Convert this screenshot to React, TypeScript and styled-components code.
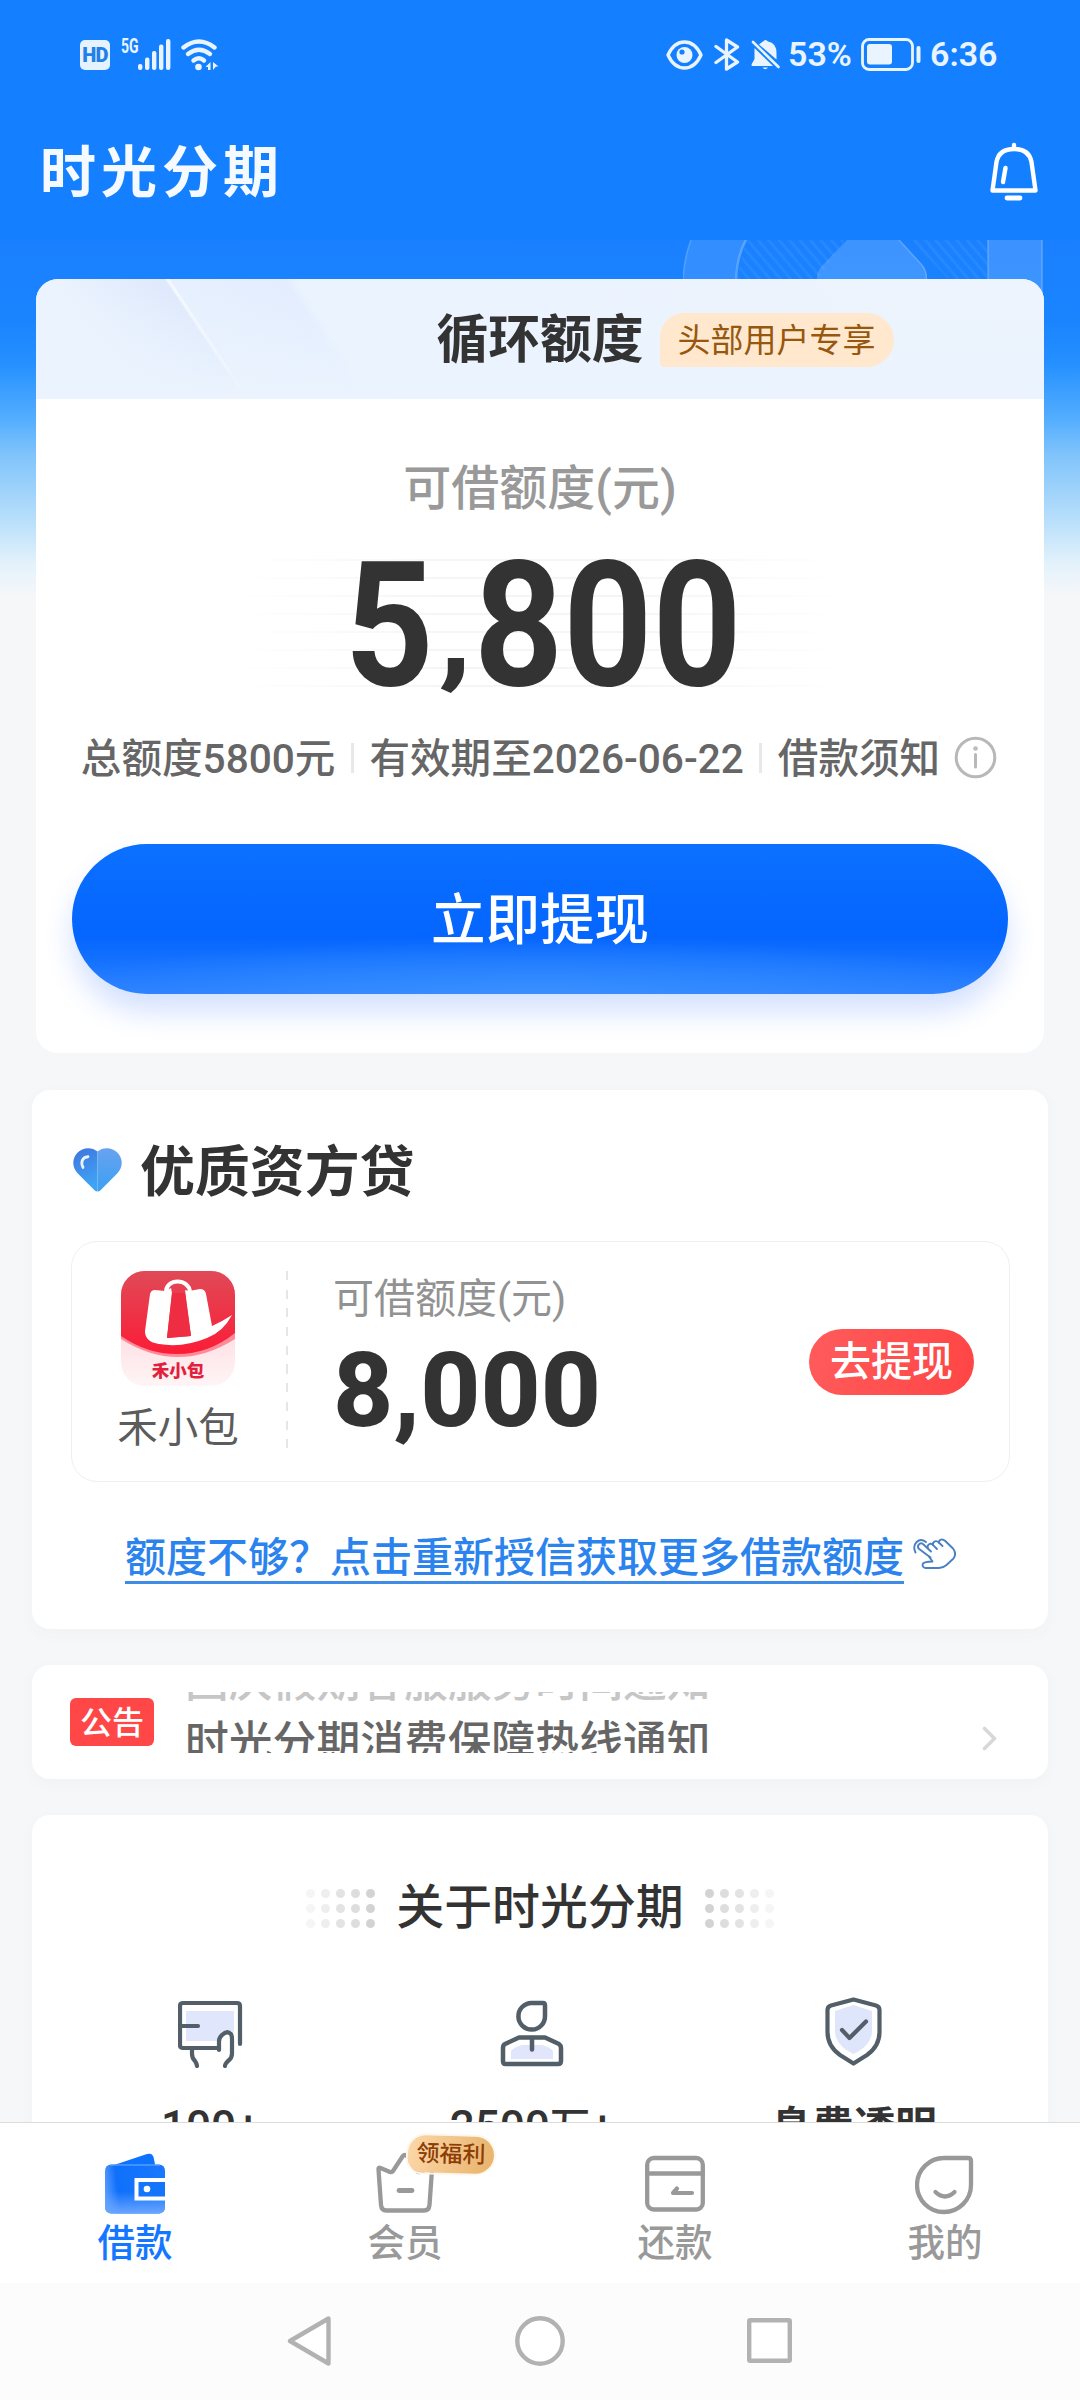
import React from "react";
import styled, { createGlobalStyle, css } from "styled-components";

const CJK = `"Noto Sans CJK SC", sans-serif`;
const MIXED = `Roboto, "Noto Sans CJK SC", sans-serif`;

const GlobalStyle = createGlobalStyle`
  * { box-sizing: border-box; }
  body { margin: 0; background: #f6f7f9; }
  svg { display: block; flex: none; }
`;

const Screen = styled.div`
  position: relative;
  width: 1080px;
  height: 2400px;
  overflow: hidden;
  display: flex;
  flex-direction: column;
  font-family: ${MIXED};
  background: linear-gradient(
    #1480ff 0,
    #1480ff 239px,
    #1a80ff 241px,
    #1a84ff 320px,
    #2490ff 363px,
    #55aeff 420px,
    #80c4fb 455px,
    #b8dffb 520px,
    #e4f2fb 565px,
    #f6f7f9 597px
  );
`;

const StatusBar = styled.header`
  flex: none;
  height: 108px;
  padding: 0 78px 0 80px;
  display: flex;
  justify-content: space-between;
  color: #e9f4ff;
`;

const StatusGroup = styled.div`
  display: flex;
  align-items: center;
  height: 109px;
`;

const HdBadge = styled.span`
  width: 30px;
  height: 30px;
  margin-right: 11px;
  border-radius: 5px;
  background: #e4f3ff;
  color: #2380e8;
  font: 900 20px/31px Roboto, sans-serif;
  text-align: center;
  letter-spacing: -0.8px;
`;

const NetworkType = styled.span`
  align-self: flex-start;
  margin-top: 36px;
  width: 17px;
  font: 700 20px/20px Roboto, sans-serif;
  transform: scaleX(0.7);
  transform-origin: left;
`;

const StatusText = styled.span<{ $width: number }>`
  width: ${(p) => p.$width}px;
  font: 600 34px/43px Roboto, sans-serif;
  white-space: nowrap;
`;

const TitleBar = styled.div`
  flex: none;
  height: 132px;
  padding: 0 42px 0 40px;
  display: flex;
  align-items: flex-start;
  justify-content: space-between;
`;

const Brand = styled.h1`
  margin: 20px 0 0;
  font: 700 56px/80px ${CJK};
  letter-spacing: 5px;
  color: #f4faff;
`;

const BellButton = styled.button`
  margin: 34px 0 0;
  padding: 0;
  border: 0;
  background: none;
`;

const Decor = styled.svg`
  position: absolute;
  left: 683px;
  top: 240px;
`;

const Content = styled.main`
  position: relative;
  flex: 1;
  min-height: 0;
  overflow: hidden;
  padding: 39px 32px 0;
`;

const CreditCard = styled.section`
  height: 774px;
  margin: 0 4px;
  border-radius: 22px;
  background: #fff;
  overflow: hidden;
`;

const CreditHead = styled.div`
  height: 120px;
  display: grid;
  grid-template-columns: 1fr auto 1fr;
  align-items: center;
  background:
    linear-gradient(rgba(235, 243, 254, 0) 10%, #ebf3fe 100%),
    linear-gradient(56.3deg, transparent 0 174px, rgba(255, 255, 255, 0.6) 175px 177px, transparent 178px),
    linear-gradient(56.3deg, #ebf3fe 80px, #dfe9fc 172px, #e7f0fe 177px, #e3edfe 272px, #ebf3fe 282px, #edf4fe);
`;

const CreditTitle = styled.h2`
  grid-column: 2;
  margin: 3px 0 0;
  font: 700 51.8px/70px ${MIXED};
  color: #333;
`;

const UserTag = styled.span`
  justify-self: start;
  margin: 2px 0 0 16px;
  height: 54px;
  padding: 0 18px;
  border-radius: 24px 27px 27px 4px;
  background: #ffe8cd;
  color: #96570f;
  font: 400 33px/55px ${MIXED};
`;

const CreditBody = styled.div`
  display: flex;
  flex-direction: column;
  align-items: center;
  padding: 60px 36px 0;
`;

const AmountLabel = styled.div<{ $size: number }>`
  font: 500 ${(p) => p.$size}px/60px ${MIXED};
  color: #999;
`;

const BigAmount = styled.div`
  width: 600px;
  height: 140px;
  margin-top: 36px;
  display: flex;
  justify-content: center;
  background:
    linear-gradient(90deg, #fff, rgba(255, 255, 255, 0) 35%, rgba(255, 255, 255, 0) 65%, #fff),
    repeating-linear-gradient(#fff 0 4px, #f5f5f9 4px 6px, #fff 6px 18px);
`;

const BigDigits = styled.span`
  font: 700 174px/141px Roboto, sans-serif;
  color: #333;
  white-space: nowrap;
  transform: translateX(3px) scaleX(0.893);
`;

const Comma = styled.span`
  display: inline-block;
  width: 45px;
  font-size: 118px;
  line-height: 1;
  text-align: center;
  vertical-align: 13px;
  transform: translateX(1px) scaleX(1.3);
`;

const InfoRow = styled.div`
  height: 50px;
  margin-top: 39px;
  display: flex;
  align-items: center;
  font: 500 40.6px/50px ${MIXED};
  color: #666;
  white-space: nowrap;
`;

const Divider = styled.i`
  width: 3px;
  height: 30px;
  margin: -2px 15.5px 0;
  background: #e8e8e8;
`;

const PrimaryButton = styled.button`
  width: 936px;
  height: 150px;
  margin-top: 60px;
  padding: 0;
  border: 0;
  border-radius: 75px;
  color: #fff;
  font: 500 54.5px/152px ${MIXED};
  background:
    radial-gradient(ellipse 520px 55px at 50% 100%, rgba(58, 146, 255, 0.85), rgba(58, 146, 255, 0)),
    linear-gradient(#0c70ff 0, #0668ff 45%, #0566ff 62%, #1b76ff 84%, #2c80ff 100%);
  box-shadow: 0 18px 28px rgba(40, 106, 255, 0.2);
`;

const Panel = styled.section<{ $h: number; $gap?: number }>`
  height: ${(p) => p.$h}px;
  margin-top: ${(p) => p.$gap ?? 36}px;
  border-radius: 18px;
  background: #fff;
  box-shadow: 0 4px 16px rgba(60, 80, 100, 0.03);
`;

const PartnerPanel = styled(Panel)`
  padding: 47px 38px 0 39px;
`;

const PanelTitle = styled.h2`
  margin: 0;
  height: 70px;
  display: flex;
  align-items: center;
  gap: 18px;
  padding-left: 2px;
  font: 700 54.9px/72px ${MIXED};
  color: #333;
`;

const Offer = styled.div`
  height: 241px;
  margin-top: 34px;
  padding-right: 35px;
  display: flex;
  align-items: center;
  border: 1.5px solid #f0f0f0;
  border-radius: 26px;
`;

const Merchant = styled.div`
  width: 216px;
  height: 182px;
  padding-right: 4px;
  display: flex;
  flex-direction: column;
  align-items: center;
  background: repeating-linear-gradient(#e6e6e6 0 9px, transparent 9px 18.7px) right / 2px 100% no-repeat;
`;

const MerchantLogo = styled.div`
  position: relative;
  width: 114px;
  height: 115px;
  border-radius: 24px;
  overflow: hidden;
`;

const LogoCaption = styled.span`
  position: absolute;
  left: 0;
  right: 0;
  bottom: 6px;
  text-align: center;
  font: 900 17.5px/20px ${CJK};
  color: #e21f3c;
`;

const MerchantName = styled.div`
  margin-top: 17px;
  font: 400 40.5px/50px ${MIXED};
  color: #5c5c5c;
`;

const OfferInfo = styled.div`
  flex: 1;
  height: 182px;
  padding-left: 45px;
`;

const OfferLabel = styled.div`
  margin-top: -2px;
  font: 400 41px/60px ${MIXED};
  color: #929292;
`;

const OfferAmount = styled.div`
  margin-top: 5px;
  font: 800 104.5px/114px Roboto, sans-serif;
  color: #333;
`;

const OfferButton = styled.button`
  width: 165px;
  height: 66px;
  padding: 0;
  border: 0;
  border-radius: 33px;
  background: linear-gradient(100deg, #ff5b5b, #ff4545);
  color: #fff;
  font: 500 41px/67px ${MIXED};
`;

const MoreLink = styled.a`
  display: flex;
  align-items: center;
  justify-content: center;
  gap: 9px;
  margin: 47px 0 0 0;
  color: #2b83ee;
`;

const MoreText = styled.span`
  height: 55px;
  border-bottom: 3px solid #3f8ce8;
  font: 500 41px/58px ${MIXED};
  white-space: nowrap;
`;

const NoticePanel = styled(Panel)`
  display: flex;
  align-items: flex-start;
  padding: 27px 51px 0 38px;
`;

const NoticeTag = styled.span`
  width: 84px;
  height: 48px;
  margin: 6px 31px 0 0;
  border-radius: 6px;
  background: #ff4747;
  color: #fff;
  font: 500 32px/51px ${MIXED};
  text-align: center;
`;

const Ticker = styled.div`
  flex: 1;
  height: 61px;
  overflow: hidden;
`;

const TickerLine = styled.div<{ $leaving?: boolean }>`
  height: 61px;
  font: 500 43.8px/61px ${MIXED};
  color: #666;
  ${(p) =>
    p.$leaving &&
    css`
      margin-top: -40px;
      color: #c6c6c6;
    `}
`;

const ChevronBox = styled.div`
  margin-top: 34px;
`;

const AboutPanel = styled(Panel)`
  padding-top: 61px;
`;

const AboutTitle = styled.h2`
  margin: 0;
  height: 64px;
  display: flex;
  align-items: center;
  justify-content: center;
  gap: 21px;
  font: 500 47.9px/65px ${MIXED};
  color: #333;
`;

const DotGrid = styled.span`
  display: grid;
  grid-template-columns: repeat(5, 9px);
  gap: 6px;
`;

const Dot = styled.i<{ $alpha: number }>`
  width: 9px;
  height: 9px;
  border-radius: 50%;
  background: rgba(200, 200, 200, ${(p) => p.$alpha});
`;

const Features = styled.div`
  margin: 56px 0 0 18px;
  display: grid;
  grid-template-columns: repeat(3, 321.5px);
`;

const Feature = styled.div`
  display: flex;
  flex-direction: column;
  align-items: center;
`;

const FeatureLabel = styled.div<{ $bold?: boolean }>`
  margin-top: 30px;
  color: #333;
  font: ${(p) => (p.$bold ? "700 41.5px" : "500 40.5px")} / 60px ${MIXED};
`;

const Numeral = styled.span`
  font-size: 44px;
  line-height: 1;
`;

const TabBar = styled.nav`
  flex: none;
  height: 161px;
  display: grid;
  grid-template-columns: repeat(4, 1fr);
  border-top: 1.5px solid #dcdcdc;
  background: #fff;
`;

const Tab = styled.div<{ $active?: boolean }>`
  position: relative;
  display: flex;
  flex-direction: column;
  align-items: center;
  padding-top: 28px;
  color: ${(p) => (p.$active ? "#1377ff" : "#999")};
  font: 500 37.5px/50px ${MIXED};
`;

const TabLabel = styled.span`
  margin-top: 3px;
`;

const TabBadge = styled.span`
  position: absolute;
  left: 138px;
  top: 13px;
  width: 86px;
  height: 37px;
  border-radius: 18px 19px 19px 14px;
  background: linear-gradient(100deg, #fcd7a9, #e8b36b);
  box-shadow: 0 0 0 2px #fff7ee;
  color: #8d3e07;
  font: 500 23px/38px ${MIXED};
  text-align: center;
  transform: rotate(1.5deg);
`;

const SystemNav = styled.footer`
  flex: none;
  height: 117px;
  padding: 0 1px 2px 0;
  display: flex;
  align-items: center;
  justify-content: center;
  gap: 182px;
  background: #fcfcfc;
`;

const SignalIcon = () => (
  <svg width="33" height="31" viewBox="0 0 33 31" fill="currentColor">
    <rect x="0" y="25" width="4.400" height="6" rx="2" />
    <rect x="7" y="18.500" width="4.400" height="12.500" rx="2" />
    <rect x="14" y="12" width="4.400" height="19" rx="2" />
    <rect x="21" y="5.500" width="4.400" height="25.500" rx="2" />
    <rect x="28" y="0" width="4.400" height="31" rx="2" />
  </svg>
);

const Wifi = styled.svg`
  margin-left: 10px;
`;

const WifiIcon = () => (
  <Wifi width="38" height="32" viewBox="0 0 38 32" fill="none" stroke="currentColor" strokeWidth="4.400" strokeLinecap="round">
    <path d="M2.500 8.500Q18 -3.500 33.500 8.500" />
    <path d="M7 15Q18 6.500 29 15" />
    <path d="M12.500 21.500Q18 17 23 21.500" />
    <circle cx="17.500" cy="28" r="3.300" fill="currentColor" stroke="none" />
    <path d="M29.500 23v8h-2.500v-3H24.500zM32 23l5.500 4.500h-2.500L32 31z" fill="currentColor" stroke="none" />
  </Wifi>
);

const StatusIcon = styled.svg<{ $after: number }>`
  margin-right: ${(p) => p.$after}px;
`;

const EyeIcon = () => (
  <StatusIcon $after={11} width="37" height="30" viewBox="0 0 37 30">
    <path d="M2 15Q8 2 18.500 2Q29 2 35 15Q29 28 18.500 28Q8 28 2 15Z" fill="none" stroke="currentColor" strokeWidth="3.400" strokeLinejoin="round" />
    <circle cx="18.500" cy="15" r="8" fill="currentColor" />
    <circle cx="16" cy="12" r="2.600" fill="#1480ff" />
  </StatusIcon>
);

const BluetoothIcon = () => (
  <StatusIcon $after={11} width="26" height="33" viewBox="0 0 26 33" fill="none" stroke="currentColor" strokeWidth="3.300" strokeLinejoin="round" strokeLinecap="round">
    <path d="M2 8.500L23.500 24L12.500 31V2L23.500 9L2 24.500" />
  </StatusIcon>
);

const MuteIcon = () => (
  <StatusIcon $after={8} width="29" height="32" viewBox="0 0 29 32" fill="currentColor">
    <path d="M3.500 9L22 27H1Q0 26 1 24.500L3.500 20Z" />
    <path d="M8 5.500Q11 3 12 2.500Q14.500 -0.500 17 2.500Q25.500 4 25.500 14V20.500Z" />
    <path d="M2 3L27.500 28" stroke="currentColor" strokeWidth="2.600" strokeLinecap="round" />
    <path d="M11.500 28.500h5.500q-2.700 3.600-5.500 0z" />
  </StatusIcon>
);

const Battery = styled.svg`
  margin: 0 9px 0 8px;
`;

const BatteryIcon = () => (
  <Battery width="60" height="33" viewBox="0 0 60 33">
    <rect x="1.500" y="1.500" width="50" height="30" rx="6.500" fill="none" stroke="currentColor" strokeWidth="2.800" />
    <rect x="6" y="6" width="25" height="20.500" rx="3" fill="currentColor" />
    <rect x="55.500" y="8" width="4" height="17" rx="2" fill="currentColor" />
  </Battery>
);

const BellIcon = () => (
  <svg width="48" height="59" viewBox="0 0 48 59" fill="none" stroke="#fff" strokeWidth="4.400" strokeLinecap="round" strokeLinejoin="round">
    <path d="M24 3v4M2.500 48.500L6.500 20Q9 7 24 7Q39 7 41.500 20L45.500 48.500Z" />
    <path d="M15.500 26L13 40" />
    <path d="M17 56h13" strokeWidth="4.800" />
  </svg>
);

const HeaderDecor = () => (
  <Decor width="360" height="75" viewBox="0 0 360 75">
    <defs>
      <pattern id="hatch" width="8" height="8" patternUnits="userSpaceOnUse" patternTransform="rotate(-40)">
        <rect width="3" height="8" fill="#fff" opacity="0.055" />
      </pattern>
    </defs>
    <path d="M63 0H162L134 40H54Z" fill="url(#hatch)" />
    <path d="M228 0H304V75H300Z" fill="url(#hatch)" />
    <path d="M8 0Q1 18 0 40H52Q54 16 63 0Z" fill="#fff" opacity="0.11" />
    <path d="M8 0Q1 18 0 40" fill="none" stroke="#fff" strokeWidth="1.500" opacity="0.2" />
    <path d="M63 0Q54 16 53 40" fill="none" stroke="#8cc0ff" strokeWidth="2.500" opacity="0.5" />
    <path d="M164 0L138 27Q132 34 135 45H243Q246 32 238 24L216 0Z" fill="#fff" opacity="0.16" />
    <path d="M216 0L238 24Q246 33 242 45" fill="none" stroke="#8cc0ff" strokeWidth="1.500" opacity="0.5" />
    <rect x="305" y="0" width="54" height="75" fill="#fff" opacity="0.15" />
    <path d="M305 0V75M359 0V75" stroke="#8cc0ff" strokeWidth="1.500" opacity="0.5" />
  </Decor>
);

const Info = styled.svg`
  margin: -4px 2px 0 14px;
`;

const InfoIcon = () => (
  <Info width="43" height="43" viewBox="0 0 43 43" fill="none" stroke="#b8b8b8" strokeWidth="3" strokeLinecap="round">
    <circle cx="21.500" cy="21.500" r="19.300" />
    <path d="M21.500 18.500V31" />
    <circle cx="21.500" cy="12.500" r="0.800" fill="#b8b8b8" />
  </Info>
);

const Heart = styled.svg`
  margin-top: -4px;
`;

const HeartIcon = () => (
  <Heart width="49" height="44" viewBox="0 0 49 43" preserveAspectRatio="none">
    <defs>
      <linearGradient id="heartL" x2="0.300" y2="1">
        <stop stopColor="#3f74dc" />
        <stop offset="1" stopColor="#3fa4f5" />
      </linearGradient>
      <linearGradient id="heartR" x2="0" y2="1">
        <stop stopColor="#68a2f0" />
        <stop offset="1" stopColor="#3ba0f3" />
      </linearGradient>
    </defs>
    <path d="M24.500 3.500C19 -1.200 9.500 -1 4.200 5C-1.200 11.200 -1 19 4.800 25L21.500 41.300Q22.800 42.600 24.500 42.600Z" fill="url(#heartL)" />
    <path d="M24.500 3.500C30 -1.200 39.500 -1 44.800 5C50.200 11.200 50 19 44.200 25L27.500 41.300Q26.200 42.600 24.500 42.600Z" fill="url(#heartR)" />
    <path d="M15 8.500C9 9 7.500 14 10 19" fill="none" stroke="#e8f4ff" strokeWidth="2.800" strokeLinecap="round" />
  </Heart>
);

const BagLogo = () => (
  <svg width="114" height="115" viewBox="0 0 114 115">
    <defs>
      <linearGradient id="bagRed" x2="0" y2="1">
        <stop stopColor="#e04a58" />
        <stop offset="1" stopColor="#fb1c36" />
      </linearGradient>
      <linearGradient id="bagPink" x2="0" y2="1">
        <stop offset="0.550" stopColor="#fddfe3" />
        <stop offset="1" stopColor="#fff5f6" />
      </linearGradient>
    </defs>
    <rect width="114" height="115" fill="url(#bagPink)" />
    <path d="M0 0H114V68Q57 104 0 68Z" fill="#ff8a98" />
    <path d="M0 0H114V62Q88 83 56 83Q26 83 0 65Z" fill="url(#bagRed)" />
    <path d="M45 21C45 7 68 7 69 21" fill="none" stroke="#fff" strokeWidth="4" />
    <path d="M34 19L44 20L50 17L51 22L46 67L70 65L64 19L68 20L79 18Q84 18 85 23L91 55Q102 50 111 44Q102 61 86 67Q62 77 38 73Q24 71 24 60L29 23Q30 19 34 19Z" fill="#fff" />
    <path d="M51 22H64L70 65L46 67Z" fill="#ee2d43" />
  </svg>
);

const Hand = styled.svg`
  margin-top: -6px;
`;

const HandIcon = () => (
  <Hand width="43" height="32" viewBox="0 0 43 32" fill="none" stroke="#4a80c0" strokeWidth="1.900" strokeLinecap="round" strokeLinejoin="round">
    <path d="M2.500 14.500C-1.500 6 6 -1.500 13 4" />
    <path d="M17.500 19.500L5.500 10.500C3.500 6.500 8 3.800 10.500 6.500L18 13.500" />
    <path d="M14.800 10C13.800 6.500 17.500 4.500 19.800 6.800L24 11" />
    <path d="M19.800 6.800C19.800 3 23.500 2 25.800 4.500L29.500 8" />
    <path d="M25.800 4.500C26 1.200 29.500 0.500 32 2.800L40 10.500Q44 15.500 40.500 20.500L33.500 27Q30 30 26 30H12.500Q8.500 29 10 25.500Q11.500 23.800 19.500 23.500L16 18.500" />
  </Hand>
);

const ChevronIcon = () => (
  <svg width="15" height="25" viewBox="0 0 15 25" fill="none" stroke="#d8d8d8" strokeWidth="3.600" strokeLinecap="round" strokeLinejoin="round">
    <path d="M2.500 2.500L12.500 12.500L2.500 22.500" />
  </svg>
);

const line = { fill: "none", stroke: "#525e68", strokeWidth: 4.5, strokeLinecap: "round", strokeLinejoin: "round" } as const;

const HoldCardIcon = () => (
  <svg width="65" height="72" viewBox="0 0 65 72">
    <path d="M8 15h48v21q-8-3-12 5v4H8z" fill="#e0e6fb" />
    <g {...line} strokeWidth={4.2}>
      <path d="M62 48V10Q62 7 59 7H5Q2 7 2 10V49Q2 52 5 52H41" />
      <path d="M2 30H20" />
      <path d="M14 52V58Q14 62 17 65Q19 68 19 70" />
      <path d="M41 54V45Q41 42 44 39Q49 34 53 38Q54 40 54 43V58Q54 62 50 65Q47 68 47 70" />
    </g>
  </svg>
);

const PersonIcon = () => (
  <svg width="64" height="72" viewBox="0 0 64 72">
    <path d="M11 55Q14 51 22 49H42Q50 51 53 55V63H11z" fill="#e2e6fd" />
    <g {...line}>
      <path d="M31.500 7H43Q45 7 45 9.500V20A13.300 13.300 0 1 1 31.500 7Z" />
      <path d="M5 48L19 41.500H45L59 48Q61 49.500 61 52V65Q61 68 58 68H5.500Q3 68 3 65V52Q3 49 5 48Z" />
      <path d="M32 42V53.500" />
    </g>
  </svg>
);

const ShieldIcon = () => (
  <svg width="57" height="72" viewBox="0 0 57 72">
    <path d="M28.500 9L47 15V35Q47 49 28.500 58Q10 49 10 35V15Z" fill="#dfe6fc" />
    <g {...line} strokeWidth={4.2}>
      <path d="M28.500 3.500L51 9.500Q54.500 10.500 54.500 14V36Q54.500 50 42 59L28.500 67.500L15 59Q2.500 50 2.500 36V14Q2.500 10.500 6 9.500Z" />
      <path d="M17 34L24.500 42L41 25.500" />
    </g>
  </svg>
);

const WalletIcon = () => (
  <svg width="60" height="64" viewBox="0 0 60 64">
    <defs>
      <linearGradient id="wallet" x1="0" y1="0.600" x2="1" y2="0.500">
        <stop stopColor="#5a9dff" />
        <stop offset="0.220" stopColor="#0f70fb" />
        <stop offset="1" stopColor="#1a78ff" />
      </linearGradient>
      <linearGradient id="walletFade" x2="0" y2="1">
        <stop offset="0.550" stopColor="#6aa5ff" stopOpacity="0" />
        <stop offset="1" stopColor="#6aa5ff" />
      </linearGradient>
    </defs>
    <path d="M6 15L42 3Q47 1.500 48.500 6L51 18H4Z" fill="#0c72ff" />
    <rect y="13.500" width="60" height="49" rx="6" fill="url(#wallet)" />
    <rect y="13.500" width="60" height="49" rx="6" fill="url(#walletFade)" />
    <path d="M5 14H55" stroke="#6fb0ff" strokeWidth="1" />
    <path d="M60 29H31.500V47.500H60" fill="#1474fb" stroke="#fff" strokeWidth="4" />
    <circle cx="42" cy="38" r="3.300" fill="#fff" />
  </svg>
);

const tabLine = { fill: "none", stroke: "#999", strokeWidth: 4.3, strokeLinecap: "round", strokeLinejoin: "round" } as const;

const CrownIcon = () => (
  <svg width="60" height="64" viewBox="0 0 60 64" {...tabLine}>
    <path d="M3.500 18.500Q3 16 5.500 17L15 21Q17 21.500 18 20L27.500 5.500Q30 2.500 32.500 5.500L42 20Q43 21.500 45 21L54.500 17Q57.500 16 57 18.500L54.500 54Q54 59.500 49 59.500H11.500Q6.500 59.500 6 54Z" />
    <path d="M24 39.500H37" strokeWidth="4.800" />
  </svg>
);

const RepayIcon = () => (
  <svg width="60" height="64" viewBox="0 0 60 64" {...tabLine}>
    <rect x="2.200" y="7" width="55.600" height="51.500" rx="6.500" />
    <path d="M2 22.500H58" />
    <path d="M47 42H28L32 37.500" strokeWidth="4.200" />
  </svg>
);

const MineIcon = () => (
  <svg width="60" height="64" viewBox="0 0 60 64" {...tabLine}>
    <path d="M29.500 7H53Q56 7 56 10V34A27 27 0 1 1 29.500 7Z" />
    <path d="M20.500 41Q30 50 39.500 41" />
  </svg>
);

const navLine = { fill: "#fff", stroke: "#b2b2b2", strokeWidth: 4.4, strokeLinejoin: "round" } as const;

const tabs = [
  { label: "借款", icon: <WalletIcon />, active: true },
  { label: "会员", icon: <CrownIcon />, badge: "领福利" },
  { label: "还款", icon: <RepayIcon /> },
  { label: "我的", icon: <MineIcon /> },
];

const features = [
  { key: "partners", label: <Numeral>100+</Numeral>, icon: <HoldCardIcon /> },
  {
    key: "users",
    label: (
      <>
        <Numeral>2500</Numeral>万<Numeral>+</Numeral>
      </>
    ),
    icon: <PersonIcon />,
  },
  { key: "fees", label: "息费透明", icon: <ShieldIcon />, bold: true },
];

const fade = [0.18, 0.3, 0.5, 0.62, 0.8];

const Dots = ({ mirrored }: { mirrored?: boolean }) => {
  const row = mirrored ? [...fade].reverse() : fade;
  return (
    <DotGrid>
      {[...row, ...row, ...row].map((a, i) => (
        <Dot key={i} $alpha={a} />
      ))}
    </DotGrid>
  );
};

export default function App() {
  return (
    <Screen>
      <GlobalStyle />
      <StatusBar>
        <StatusGroup>
          <HdBadge>HD</HdBadge>
          <NetworkType>5G</NetworkType>
          <SignalIcon />
          <WifiIcon />
        </StatusGroup>
        <StatusGroup>
          <EyeIcon />
          <BluetoothIcon />
          <MuteIcon />
          <StatusText $width={65}>53%</StatusText>
          <BatteryIcon />
          <StatusText $width={72}>6:36</StatusText>
        </StatusGroup>
      </StatusBar>
      <TitleBar>
        <Brand>时光分期</Brand>
        <BellButton>
          <BellIcon />
        </BellButton>
      </TitleBar>
      <HeaderDecor />
      <Content>
        <CreditCard>
          <CreditHead>
            <CreditTitle>循环额度</CreditTitle>
            <UserTag>头部用户专享</UserTag>
          </CreditHead>
          <CreditBody>
            <AmountLabel $size={48}>可借额度(元)</AmountLabel>
            <BigAmount>
              <BigDigits>
                5<Comma>,</Comma>800
              </BigDigits>
            </BigAmount>
            <InfoRow>
              <span>总额度5800元</span>
              <Divider />
              <span>有效期至2026-06-22</span>
              <Divider />
              <span>借款须知</span>
              <InfoIcon />
            </InfoRow>
            <PrimaryButton>立即提现</PrimaryButton>
          </CreditBody>
        </CreditCard>

        <PartnerPanel $h={539} $gap={37}>
          <PanelTitle>
            <HeartIcon />
            优质资方贷
          </PanelTitle>
          <Offer>
            <Merchant>
              <MerchantLogo>
                <BagLogo />
                <LogoCaption>禾小包</LogoCaption>
              </MerchantLogo>
              <MerchantName>禾小包</MerchantName>
            </Merchant>
            <OfferInfo>
              <OfferLabel>可借额度(元)</OfferLabel>
              <OfferAmount>8,000</OfferAmount>
            </OfferInfo>
            <OfferButton>去提现</OfferButton>
          </Offer>
          <MoreLink>
            <MoreText>额度不够？点击重新授信获取更多借款额度</MoreText>
            <HandIcon />
          </MoreLink>
        </PartnerPanel>

        <NoticePanel $h={114}>
          <NoticeTag>公告</NoticeTag>
          <Ticker>
            <TickerLine $leaving>国庆假期客服服务时间通知</TickerLine>
            <TickerLine>时光分期消费保障热线通知</TickerLine>
          </Ticker>
          <ChevronBox>
            <ChevronIcon />
          </ChevronBox>
        </NoticePanel>

        <AboutPanel $h={420}>
          <AboutTitle>
            <Dots />
            关于时光分期
            <Dots mirrored />
          </AboutTitle>
          <Features>
            {features.map((f) => (
              <Feature key={f.key}>
                {f.icon}
                <FeatureLabel $bold={f.bold}>{f.label}</FeatureLabel>
              </Feature>
            ))}
          </Features>
        </AboutPanel>
      </Content>

      <TabBar>
        {tabs.map((t) => (
          <Tab key={t.label} $active={t.active}>
            {t.icon}
            <TabLabel>{t.label}</TabLabel>
            {t.badge && <TabBadge>{t.badge}</TabBadge>}
          </Tab>
        ))}
      </TabBar>

      <SystemNav>
        <svg width="46" height="50" viewBox="0 0 46 50" {...navLine}>
          <path d="M41.500 2.500V47.500L3 25Z" />
        </svg>
        <svg width="50" height="50" viewBox="0 0 50 50" {...navLine}>
          <circle cx="25" cy="25" r="22.700" />
        </svg>
        <svg width="45" height="45" viewBox="0 0 45 45" {...navLine}>
          <rect x="2.200" y="2.200" width="40.600" height="40.600" rx="1" />
        </svg>
      </SystemNav>
    </Screen>
  );
}
